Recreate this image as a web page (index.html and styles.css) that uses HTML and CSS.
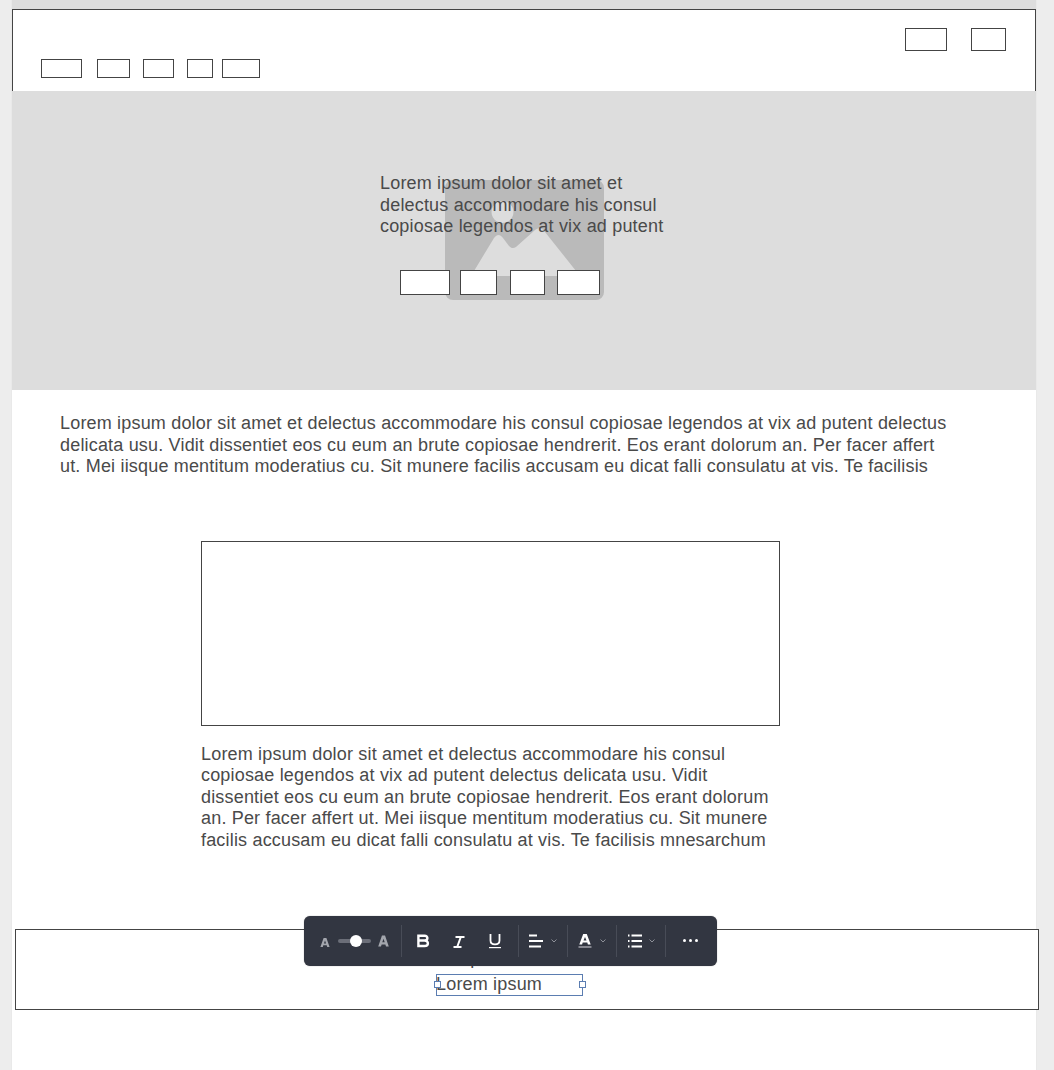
FILE: index.html
```html
<!DOCTYPE html>
<html lang="la">
<head>
  <meta charset="UTF-8" />
  <meta name="viewport" content="width=device-width, initial-scale=1.0"/>
  <title>Lorem ipsum</title>
  <link rel="stylesheet" href="styles.css">
</head>
<body>
  <div class="canvas">
    <header class="header">
      <div class="header-top">
        <div class="box box-top-a"></div>
        <div class="box box-top-b"></div>
      </div>
      <nav class="header-nav">
        <div class="box nav-a"></div>
        <div class="box nav-b"></div>
        <div class="box nav-c"></div>
        <div class="box nav-d"></div>
        <div class="box nav-e"></div>
      </nav>
    </header>

    <section class="hero">
      <svg class="hero-image" viewBox="0 0 159 120" aria-hidden="true">
        <path fill="#bababa" fill-rule="evenodd" d="M8 0H151a8 8 0 0 1 8 8V112a8 8 0 0 1-8 8H8a8 8 0 0 1-8-8V8a8 8 0 0 1 8-8ZM57.500 21a11 11 0 1 0 .01 0ZM26 96H135L100 52C97 48 94 47 90 50L71 67C68 69 66 68 64 66L58 58C55 54 52 54 49 58Z"/>
      </svg>
      <div class="hero-content">
        <p class="hero-text">Lorem ipsum dolor sit amet et<br>delectus accommodare his consul<br>copiosae legendos at vix ad putent</p>
        <div class="hero-buttons">
          <div class="box hero-a"></div>
          <div class="box hero-b"></div>
          <div class="box hero-c"></div>
          <div class="box hero-d"></div>
        </div>
      </div>
    </section>

    <p class="intro">Lorem ipsum dolor sit amet et delectus accommodare his consul copiosae legendos at vix ad putent delectus<br>delicata usu. Vidit dissentiet eos cu eum an brute copiosae hendrerit. Eos erant dolorum an. Per facer affert<br>ut. Mei iisque mentitum moderatius cu. Sit munere facilis accusam eu dicat falli consulatu at vis. Te facilisis</p>

    <section class="feature">
      <div class="feature-frame"></div>
      <p class="feature-text">Lorem ipsum dolor sit amet et delectus accommodare his consul<br>copiosae legendos at vix ad putent delectus delicata usu. Vidit<br>dissentiet eos cu eum an brute copiosae hendrerit. Eos erant dolorum<br>an. Per facer affert ut. Mei iisque mentitum moderatius cu. Sit munere<br>facilis accusam eu dicat falli consulatu at vis. Te facilisis mnesarchum</p>
    </section>

    <footer class="footer">
      <p class="footer-line">Lorem ipsum</p>
      <div class="selected">
        <span class="handle handle-left"></span>
        <span class="selected-text">Lorem ipsum</span>
        <span class="handle handle-right"></span>
      </div>

      <div class="toolbar">
        <div class="tool-group group-size">
          <svg class="icon-a-small" viewBox="0 0 10 10"><path fill="#a3a6ad" fill-rule="evenodd" d="M3.600 1H6.400L9.600 10H7.200L6.700 8.300H3.300L2.800 10H.4ZM5 3.600 3.900 6.600H6.100Z"/></svg>
          <div class="slider"><span class="slider-knob"></span></div>
          <svg class="icon-a-large" viewBox="0 0 10 10"><path fill="#a3a6ad" fill-rule="evenodd" d="M3.600 0H6.400L9.800 10H7.300L6.700 8.200H3.300L2.700 10H.2ZM5 3 3.900 6.200H6.100Z"/></svg>
        </div>
        <div class="tool-group group-format">
          <svg class="icon-16" viewBox="0 0 16 16"><path fill="none" stroke="#fff" stroke-width="2.400" d="M3.400 2.800H9.600C11.400 2.800 12.400 3.700 12.400 5.100 12.400 6.500 11.200 7.500 9.600 7.500H3.400M9.600 7.500C11.700 7.500 12.900 8.700 12.900 10.300 12.900 11.900 11.500 13 9.600 13H3.400M3.400 1.600V14.200"/></svg>
          <svg class="icon-16" viewBox="0 0 16 16"><path fill="none" stroke="#fff" stroke-width="2" d="M4.500 4H13.500M2.500 14H10.500M9.800 4 6.200 14"/></svg>
          <svg class="icon-16" viewBox="0 0 16 16"><path fill="none" stroke="#fff" stroke-width="1.800" d="M3.500 1V7.500C3.500 10 5.200 11.300 8 11.300 10.800 11.300 12.500 10 12.500 7.500V1"/><path stroke="#fff" stroke-width="1.200" d="M2 14.600H14"/></svg>
        </div>
        <div class="tool-group group-menu">
          <svg class="icon-16" viewBox="0 0 16 16"><path stroke="#fff" stroke-width="1.800" d="M0 2.500H8M0 8H14M0 13.500H12"/></svg>
          <svg class="chevron" viewBox="0 0 6 4"><path fill="none" stroke="#8d9098" d="M.5.5 3 3 5.500.5"/></svg>
        </div>
        <div class="tool-group group-menu">
          <svg class="icon-16" viewBox="0 0 16 16"><path fill="#fff" fill-rule="evenodd" d="M5.200 1H8.800L12.700 11.500H9.900L9.300 9.500H4.700L4.100 11.500H1.300ZM7 4 5.500 7.500H8.500Z"/><path stroke="#9a9ca3" stroke-width="1.600" d="M.5 14H13.500"/></svg>
          <svg class="chevron" viewBox="0 0 6 4"><path fill="none" stroke="#8d9098" d="M.5.5 3 3 5.500.5"/></svg>
        </div>
        <div class="tool-group group-menu">
          <svg class="icon-16" viewBox="0 0 16 16"><path stroke="#fff" stroke-width="1.800" d="M1 2.500H2.500M1 8H2.500M1 13.500H2.500M4.500 2.500H15M4.500 8H15M4.500 13.500H15"/></svg>
          <svg class="chevron" viewBox="0 0 6 4"><path fill="none" stroke="#8d9098" d="M.5.5 3 3 5.500.5"/></svg>
        </div>
        <div class="tool-group group-more">
          <span class="dot"></span><span class="dot"></span><span class="dot"></span>
        </div>
      </div>
    </footer>
  </div>
</body>
</html>
```

FILE: styles.css
```css
html, body {
  margin: 0;
  height: 100%;
  overflow: hidden;
}

body {
  background-color: #ededed;
  font-family: "Liberation Sans", Arial, sans-serif;
  color: #4a4a4a;
}

p {
  margin: 0;
}

.canvas {
  width: 1024px;
  height: 1070px;
  margin-left: 12px;
  padding-top: 9px;
  box-sizing: border-box;
  background: linear-gradient(to bottom, #dddddd 9px, #ffffff 9px);
  box-shadow: 0 0 1px #d5d5d5;
}

.box {
  border: 1px solid #444;
  background-color: #fff;
  box-sizing: border-box;
}

/* header */
.header {
  height: 82px;
  box-sizing: border-box;
  border: 1px solid #444;
  border-bottom: none;
  background-color: #fff;
  padding: 18px 29px 0 28px;
}

.header-top {
  display: flex;
  justify-content: flex-end;
  gap: 24px;
}

.box-top-a { width: 42px; height: 23px; }
.box-top-b { width: 35px; height: 23px; }

.header-nav {
  display: flex;
  margin-top: 8px;
}

.header-nav .box { height: 19px; }
.nav-a { width: 41px; margin-right: 15px; }
.nav-b { width: 33px; margin-right: 13px; }
.nav-c { width: 31px; margin-right: 13px; }
.nav-d { width: 26px; margin-right: 9px; }
.nav-e { width: 38px; }

/* hero */
.hero {
  position: relative;
  height: 299px;
  background-color: #ddd;
  padding: 82px 0 0 368px;
  box-sizing: border-box;
}

.hero-image {
  position: absolute;
  left: 433px;
  top: 89px;
  width: 159px;
  height: 120px;
}

.hero-content {
  position: relative;
}

.hero-text {
  font-size: 18px;
  line-height: 21.500px;
  letter-spacing: 0.180px;
}

.hero-buttons {
  display: flex;
  margin: 32px 0 0 20px;
}

.hero-buttons .box { height: 25px; }
.hero-a { width: 50px; margin-right: 10px; }
.hero-b { width: 37px; margin-right: 13px; }
.hero-c { width: 35px; margin-right: 12px; }
.hero-d { width: 43px; }

/* text blocks */
.intro {
  margin: 23px 0 0 48px;
  font-size: 18px;
  line-height: 21.500px;
  letter-spacing: 0.180px;
}

.feature {
  margin: 63px 0 0 189px;
  width: 579px;
}

.feature-frame {
  height: 185px;
  border: 1px solid #444;
  background-color: #fff;
  box-sizing: border-box;
}

.feature-text {
  margin-top: 18.300px;
  font-size: 18px;
  line-height: 21.500px;
  letter-spacing: 0.180px;
}

/* footer */
.footer {
  position: relative;
  width: 1024px;
  height: 81px;
  margin: 77.700px 0 0 3px;
  box-sizing: border-box;
  border: 1px solid #444;
  background-color: #fff;
}

.footer-line {
  margin: 17px 0 0 393px;
  font-size: 18px;
  line-height: 22px;
  letter-spacing: 0.180px;
}

.selected {
  position: absolute;
  left: 420px;
  top: 44px;
  width: 147px;
  height: 22px;
  box-sizing: border-box;
  border: 1px solid #5b7db1;
}

.selected-text {
  display: block;
  margin-left: -1px;
  font-size: 18px;
  line-height: 19px;
  letter-spacing: 0.180px;
  white-space: nowrap;
}

.handle {
  position: absolute;
  top: 6px;
  width: 5px;
  height: 5px;
  border: 1px solid #5b7db1;
  background-color: #fff;
}

.handle-left { left: -3px; }
.handle-right { right: -4px; }

/* floating text toolbar */
.toolbar {
  position: absolute;
  left: 288px;
  top: -14px;
  width: 413px;
  height: 50px;
  box-sizing: border-box;
  display: flex;
  align-items: center;
  background-color: #323641;
  border-radius: 6px;
  box-shadow: 0 0 1px rgba(0, 0, 0, 0.5);
}

.tool-group {
  display: flex;
  align-items: center;
  height: 32px;
  border-right: 1px solid #484c57;
  box-sizing: border-box;
}

.group-size {
  width: 98px;
  padding-left: 16px;
}

.group-format {
  width: 117px;
  padding-left: 13px;
  gap: 20px;
}

.group-menu {
  width: 49px;
  padding-left: 10px;
  gap: 6px;
}

.group-more {
  border-right: none;
  padding-left: 17px;
  gap: 3px;
}

.icon-16 {
  width: 16px;
  height: 16px;
  flex-shrink: 0;
}

.icon-a-small {
  width: 10px;
  height: 10px;
  margin-top: 2px;
}

.icon-a-large {
  width: 11px;
  height: 12px;
}

.slider {
  position: relative;
  width: 33px;
  height: 4px;
  margin: 0 7px 0 8px;
  border-radius: 2px;
  background-color: #6b6e78;
}

.slider-knob {
  position: absolute;
  left: 12px;
  top: -4px;
  width: 12px;
  height: 12px;
  border-radius: 50%;
  background-color: #fff;
}

.chevron {
  width: 6px;
  height: 4px;
  margin-top: 1px;
}

.dot {
  width: 3px;
  height: 3px;
  border-radius: 50%;
  background-color: #fff;
}
```
